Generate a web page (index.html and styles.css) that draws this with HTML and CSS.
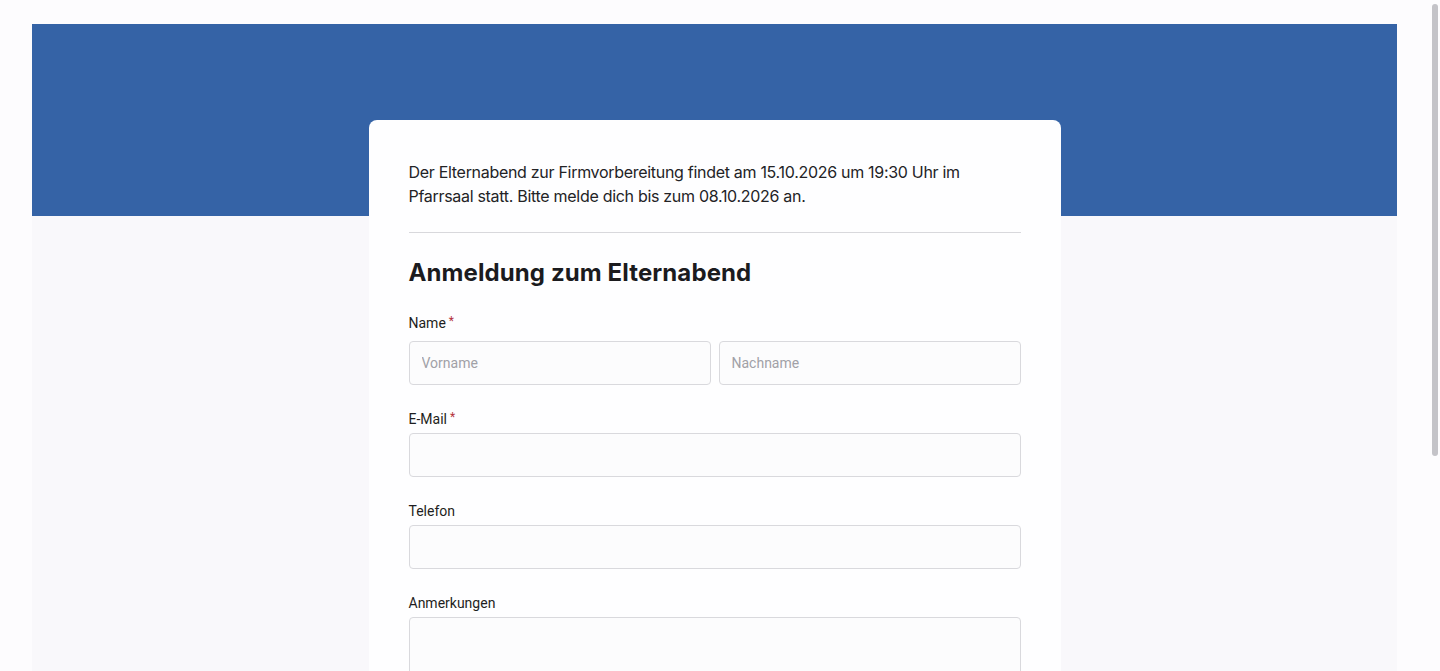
FILE: index.html
```html
<!DOCTYPE html>
<html lang="de">
<head>
<meta charset="utf-8">
<title>Anmeldung zum Elternabend</title>
<link rel="stylesheet" href="styles.css">
</head>
<body>
<div class="page">
  <div class="frame">
    <div class="banner"></div>
    <main class="content">
      <section class="card">
        <p class="intro">Der Elternabend zur Firmvorbereitung findet am 15.10.2026 um 19:30 Uhr im Pfarrsaal statt. Bitte melde dich bis zum 08.10.2026 an.</p>
        <hr class="divider">
        <h1 class="title">Anmeldung zum Elternabend</h1>
        <form class="form">
          <div class="field field-name">
            <label class="label">Name<span class="req">*</span></label>
            <div class="row">
              <input class="input" type="text" placeholder="Vorname">
              <input class="input" type="text" placeholder="Nachname">
            </div>
          </div>
          <div class="field">
            <label class="label">E-Mail<span class="req">*</span></label>
            <input class="input" type="email">
          </div>
          <div class="field">
            <label class="label">Telefon</label>
            <input class="input" type="tel">
          </div>
          <div class="field">
            <label class="label">Anmerkungen</label>
            <textarea class="input textarea"></textarea>
          </div>
        </form>
      </section>
    </main>
  </div>
</div>
<div class="scrollbar"></div>
</body>
</html>
```
FILE: styles.css
```css
* { box-sizing: border-box; }
html, body { margin: 0; padding: 0; }
body {
  background: #fdfcfe;
  font-family: Inter, "Noto Sans", sans-serif;
  color: #1c1c1f;
  overflow: hidden;
  height: 671px;
}
.page {
  padding: 24px 43px 0 32px;
}
.frame {
  background: #f9f8fb;
  min-height: 700px;
}
.banner {
  height: 192px;
  background: #3563a6;
}
.content {
  display: flex;
  justify-content: center;
  margin-top: -96px;
}
.card {
  width: 692px;
  background: #fefeff;
  border-radius: 8px;
  padding: 40px 40px 40px;
}
.intro {
  margin: 0;
  font-size: 16px;
  line-height: 24px;
  color: #232326;
  letter-spacing: -0.3px;
}
.divider {
  border: 0;
  border-top: 1px solid #d8d8dc;
  margin: 24px 0 24px;
}
.title {
  margin: 0 0 24px;
  font-size: 24px;
  line-height: 32px;
  font-weight: 700;
  color: #1b1b1e;
  letter-spacing: 0.1px;
}
.form {
  display: flex;
  flex-direction: column;
  gap: 24px;
}
.field {
  display: flex;
  flex-direction: column;
}
.field-name .label { margin-bottom: 8px; }
.label {
  font-family: Roboto, "Noto Sans", sans-serif;
  font-size: 14px;
  line-height: 20px;
  height: 20px;
  color: #1e1e21;
  margin-bottom: 4px;
}
.req {
  color: #b4323c;
  margin-left: 3px;
  font-size: 12px;
  line-height: 1;
  vertical-align: 3px;
}
.row {
  display: grid;
  grid-template-columns: 1fr 1fr;
  gap: 8px;
}
.input {
  display: block;
  width: 100%;
  height: 44px;
  border: 1px solid #d9d9dd;
  border-radius: 4px;
  background: #fcfcfd;
  padding: 0 12px;
  font-family: Roboto, "Noto Sans", sans-serif;
  font-size: 14px;
  color: #1e1e21;
  outline: none;
}
.input::placeholder { color: #a1a1a7; }
.textarea {
  height: 100px;
  resize: none;
  padding: 10px 12px;
}
.scrollbar {
  position: fixed;
  top: 4px;
  right: 2px;
  width: 6px;
  height: 452px;
  border-radius: 3px;
  background: #c4c3c8;
}
```
